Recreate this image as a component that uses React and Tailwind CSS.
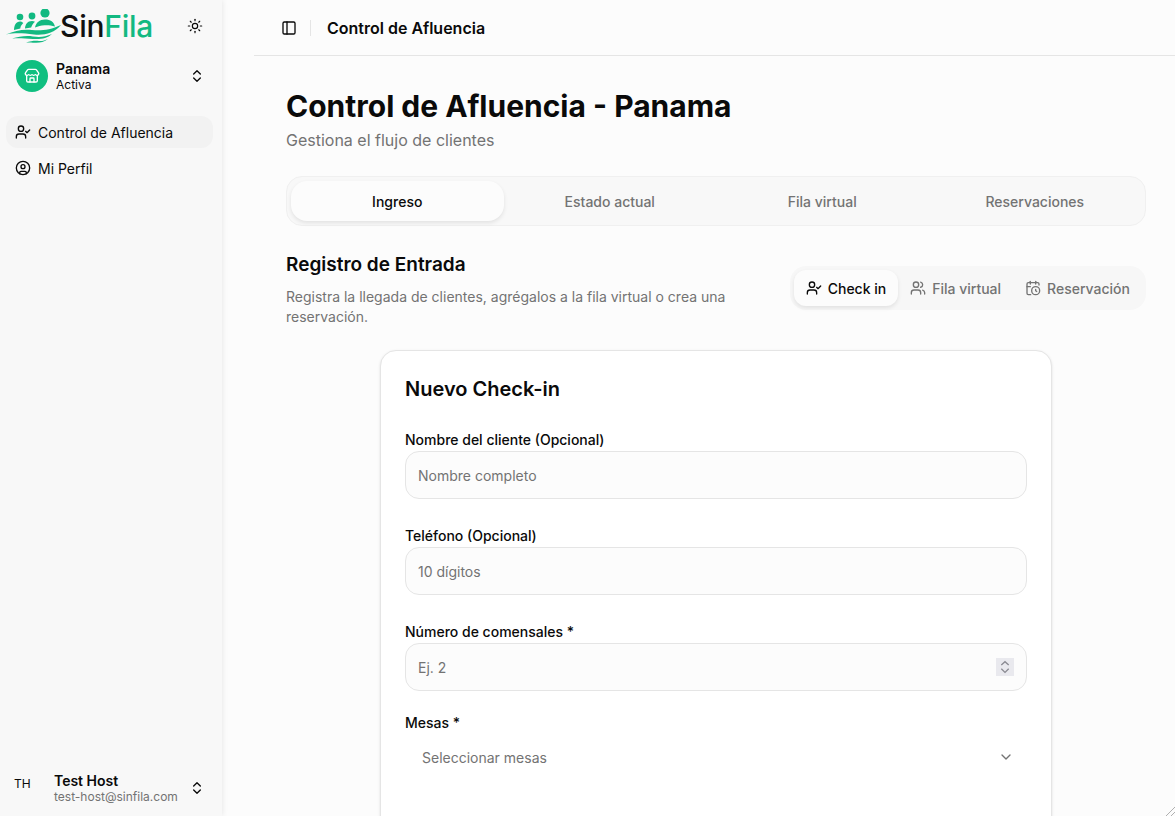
import React from 'react';
import {
  Sun,
  Store,
  ChevronsUpDown,
  UserCheck,
  CircleUser,
  PanelLeft,
  Users,
  CalendarClock,
  ChevronDown,
} from 'lucide-react';

function Logo() {
  return (
    <div className="flex items-center">
      <svg width="55" height="34" viewBox="0 0 55 34" className="shrink-0">
        <g fill="#12b981">
          <circle cx="14" cy="8" r="3.300" />
          <circle cx="26" cy="7" r="3.400" />
          <circle cx="39" cy="4" r="4.600" />
          <path d="M8 21c0-4.500 2-8.500 6-8.500 1.500 0 2.500.6 3.300 1.500-2 2-2.800 3.500-3 5.500z" />
          <path d="M19 19.500c.2-4 2.500-7.500 7-7.500 1 0 2 .2 3 .8-2 1.800-3.200 3.500-3.800 5.700z" />
          <path d="M29 18.500c1-5 4.500-8 10-8 5.500 0 9 2.500 10 7-4-1.200-7.500-1.500-10.500-1.200-3.500.2-6.500 1-9.500 2.200z" />
          <path d="M0 25.500c9-4 17-5.500 26-4.500 9 1 18 0 29-5-7 8.500-17 10.500-27 9.500-10-1-18-2-28 0z" />
          <path d="M6 29.500c7-2 14-3 21-2 7 1 12 .5 19-2.500-5 4.500-11 5.500-19 5-8-.5-14-1-21-.5z" />
          <path d="M20 33.500c5-1.500 9-2 13-1.500 3 .3 6-.5 9-2-4 3-8 4-13 3.800-4-.2-6-.5-9-.3z" />
        </g>
      </svg>
      <span className="-ml-[1px] text-[30px] leading-none font-medium tracking-[-0.25px]">
        <span className="text-[#111111]">Sin</span>
        <span className="text-[#12b981]">Fila</span>
      </span>
    </div>
  );
}

function Sidebar() {
  return (
    <aside className="w-[222px] shrink-0 h-full bg-[#f8f8f8] shadow-[0_0_6px_rgba(0,0,0,0.1)] flex flex-col text-[#0a0a0a]">
      <div className="h-[52px] pl-[6px] pr-[19px] flex items-center justify-between">
        <Logo />
        <Sun className="w-4 h-4" strokeWidth={1.75} />
      </div>
      <div className="mx-[16px] mr-[17px] h-[48px] flex items-center gap-2">
        <div className="w-8 h-8 rounded-full bg-[#10bf80] flex items-center justify-center text-white">
          <Store className="w-4 h-4" />
        </div>
        <div className="flex-1 min-w-0 flex flex-col">
          <span className="text-sm leading-[17px] font-semibold">Panama</span>
          <span className="text-xs leading-[15px]">Activa</span>
        </div>
        <ChevronsUpDown className="w-4 h-4" />
      </div>
      <nav className="mt-[16px] mx-[6px] mr-[9px] flex flex-col gap-1">
        <a className="h-8 rounded-xl bg-[#f2f2f2] pl-[9px] flex items-center gap-[7px] text-sm">
          <UserCheck className="w-4 h-4" />
          <span className="pt-px">Control de Afluencia</span>
        </a>
        <a className="h-8 rounded-xl pl-[9px] flex items-center gap-[7px] text-sm">
          <CircleUser className="w-4 h-4" />
          <span className="pt-px">Mi Perfil</span>
        </a>
      </nav>
      <div className="mt-auto h-[56px] pl-[14px] pr-[17px] flex items-center">
        <span className="w-[40px] pb-2 text-xs">TH</span>
        <div className="flex-1 min-w-0 flex flex-col">
          <span className="text-sm leading-[17px] font-semibold">Test Host</span>
          <span className="text-xs leading-[15px] text-[#737373]">test-host@sinfila.com</span>
        </div>
        <ChevronsUpDown className="w-4 h-4" />
      </div>
    </aside>
  );
}

function Field({ label, placeholder, children }) {
  return (
    <div className="flex flex-col gap-[3px]">
      <label className="text-sm leading-[17px] font-medium text-[#0a0a0a]">{label}</label>
      <div className="relative h-12 rounded-[14px] border border-[#e5e5e5] bg-[#fcfcfc] px-3 flex items-center text-sm text-[#737373]">
        <span className="pt-px">{placeholder}</span>
        {children}
      </div>
    </div>
  );
}

export default function App() {
  const tabs = ['Ingreso', 'Estado actual', 'Fila virtual', 'Reservaciones'];

  return (
    <div className="relative h-screen w-full overflow-hidden flex bg-[#fcfcfc] [font-family:Inter,sans-serif] text-[#0a0a0a]">
      <Sidebar />

      <main className="flex-1 min-w-0 pl-8 flex flex-col">
        <header className="h-[56px] shrink-0 border-b border-[#e5e5e5] pl-[27px] flex items-center">
          <PanelLeft className="w-4 h-4" />
          <div className="w-px h-4 bg-[#e5e5e5] ml-[13px] mr-4" />
          <h2 className="text-base font-semibold">Control de Afluencia</h2>
        </header>

        <div className="flex-1 min-h-0 pl-8 pr-[29px] pt-[32px]">
          <h1 className="text-3xl leading-[36px] font-bold">Control de Afluencia - Panama</h1>
          <p className="mt-[4px] text-base text-[#737373]">Gestiona el flujo de clientes</p>

          <div className="mt-[24px] h-[50px] rounded-2xl border border-[#f0f0f0] bg-[#f8f8f8] p-1 grid grid-cols-4">
            {tabs.map((tab, i) => (
              <button
                key={tab}
                className={`rounded-2xl pt-px text-sm font-medium ${
                  i === 0 ? 'bg-[#fcfcfc] shadow-[0_2px_4px_rgba(0,0,0,0.09)] text-[#0a0a0a]' : 'text-[#737373]'
                }`}
              >
                {tab}
              </button>
            ))}
          </div>

          <div className="mt-[25px] flex items-start justify-between">
            <div className="w-[460px]">
              <h3 className="text-[19px] leading-[28px] font-semibold">Registro de Entrada</h3>
              <p className="mt-[8px] text-sm leading-[20px] text-[#737373]">
                Registra la llegada de clientes, agrégalos a la fila virtual o crea una reservación.
              </p>
            </div>
            <div className="mt-[15px] h-[44px] rounded-2xl bg-[#f7f7f7] p-1 flex items-center text-sm font-medium text-[#737373]">
              <button className="h-9 pl-3 pr-3 rounded-xl bg-[#fcfcfc] shadow-[0_2px_4px_rgba(0,0,0,0.09)] text-[#0a0a0a] flex items-center gap-[6px]">
                <UserCheck className="w-4 h-4" />
                <span className="pt-px">Check in</span>
              </button>
              <button className="h-9 px-3 flex items-center gap-[6px]">
                <Users className="w-4 h-4" />
                <span className="pt-px">Fila virtual</span>
              </button>
              <button className="h-9 pl-3 pr-3 flex items-center gap-[6px]">
                <CalendarClock className="w-4 h-4" />
                <span className="pt-px">Reservación</span>
              </button>
            </div>
          </div>

          <section className="mt-[23px] mx-auto w-[672px] rounded-2xl border border-[#e5e5e5] bg-white shadow-sm px-6 pt-[24px] h-[600px]">
            <h3 className="text-xl leading-[28px] font-semibold">Nuevo Check-in</h3>
            <div className="mt-[28px] flex flex-col gap-[28px]">
              <Field label="Nombre del cliente (Opcional)" placeholder="Nombre completo" />
              <Field label="Teléfono (Opcional)" placeholder="10 dígitos" />
              <Field label="Número de comensales *" placeholder="Ej. 2">
                <div className="absolute right-3 top-[14px] w-[18px] h-[18px] bg-[#e9e9ee] text-[#8a8a92]">
                  <svg width="18" height="18" viewBox="0 0 18 18" fill="none" stroke="currentColor" strokeWidth="1.300">
                    <path d="M5.300 7 9 3.700 12.700 7" />
                    <path d="M5.300 10.700 9 14.400 12.700 10.700" />
                  </svg>
                </div>
              </Field>
              <div className="-mt-[5px]">
                <label className="block text-sm leading-[17px] font-medium">Mesas *</label>
                <div className="mt-[3px] h-[46px] pl-[17px] pr-[13px] flex items-center justify-between text-sm text-[#737373]">
                  <span className="pt-px">Seleccionar mesas</span>
                  <ChevronDown className="w-4 h-4" />
                </div>
              </div>
            </div>
          </section>
        </div>
      </main>

      {/* window resize grip */}
      <svg width="10" height="10" viewBox="0 0 10 10" className="absolute right-0 bottom-0 text-[#b0b0b0]">
        <path d="M1 10 10 1M6 10l4-4" stroke="currentColor" strokeWidth="1" fill="none" />
      </svg>
    </div>
  );
}
